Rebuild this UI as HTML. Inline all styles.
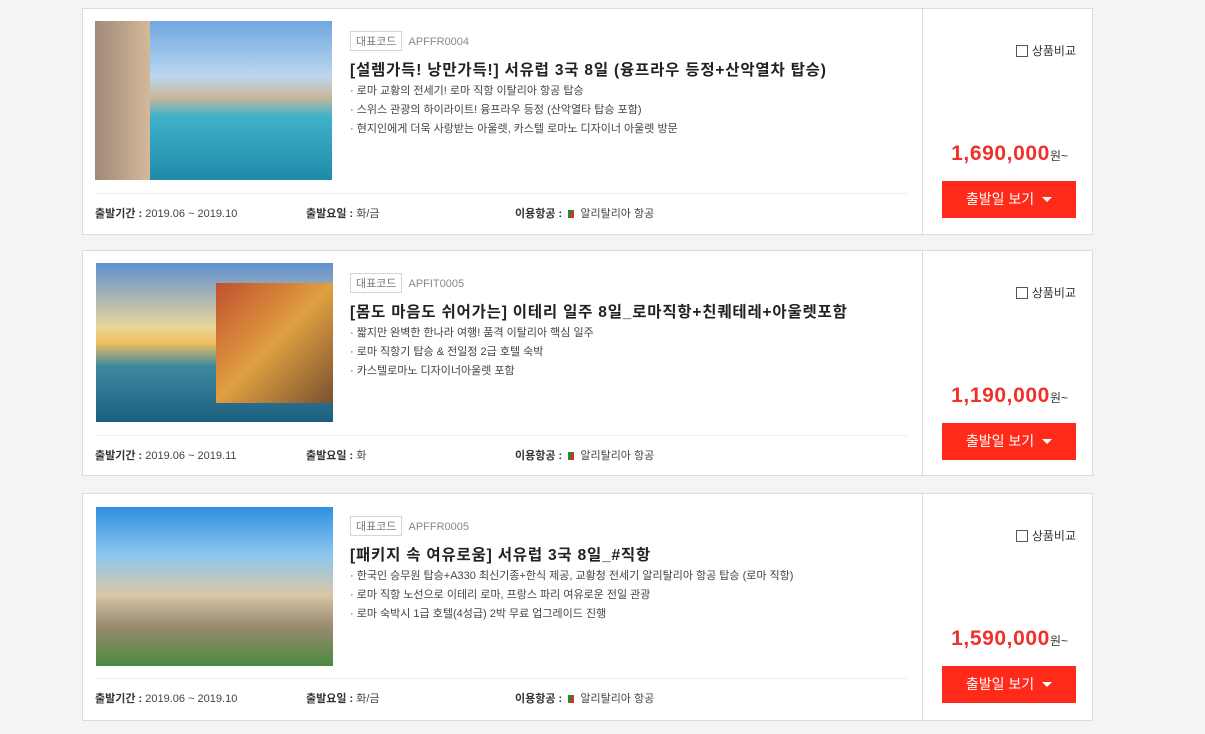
<!DOCTYPE html>
<html><head><meta charset="utf-8"><style>
*{margin:0;padding:0;box-sizing:border-box}
body{width:1205px;height:734px;background:#f4f4f4;font-family:"Liberation Sans","Noto Sans CJK KR",sans-serif;color:#333;position:relative;overflow:hidden}
.card{position:absolute;left:82px;width:1011px;background:#fff;border:1px solid #dcdcdc}
.img{position:absolute;left:12px;top:12px;width:237px;height:159px}
.code{position:absolute;left:267px;top:22px;font-size:11px;color:#888}
.code span{display:inline-block;border:1px solid #d5d5d5;padding:1px 5px;color:#777;margin-right:6px}
.title{position:absolute;left:267px;top:49px;font-size:15.5px;font-weight:bold;color:#222;white-space:nowrap;letter-spacing:0.8px}
.bul{position:absolute;left:267px;top:73px;font-size:11px;line-height:19px;color:#444;white-space:nowrap}
.sep{position:absolute;left:12px;width:813px;top:184px;border-top:1px solid #eee}
.ft{position:absolute;top:196px;font-size:11px;color:#444;white-space:nowrap}
.ft b{color:#333}
.right{position:absolute;left:839px;top:0;bottom:0;width:170px;border-left:1px solid #dcdcdc}
.cmp{position:absolute;right:16px;top:33px;font-size:12px;color:#333}
.cmp i{display:inline-block;width:12px;height:12px;border:1px solid #555;vertical-align:-2px;margin-right:4px}
.price{position:absolute;right:24px;top:133px;font-size:21px;font-weight:bold;color:#f0302a;white-space:nowrap;letter-spacing:0.6px}
.price small{font-size:12px;color:#333;font-weight:normal;letter-spacing:0}
.btn{position:absolute;left:19px;top:172px;width:134px;height:37px;background:#ff2a1a;color:#fff;font-size:14px;text-align:center;line-height:37px}
.btn em{display:inline-block;width:0;height:0;border-left:5px solid transparent;border-right:5px solid transparent;border-top:5px solid #fff;vertical-align:2px;margin-left:8px}
.fl{display:inline-block;width:6px;height:8px;background:linear-gradient(120deg,#2a8a2a 50%,#c33 50%);margin-right:6px;vertical-align:-1px}
</style></head><body>

<div class="card" style="top:8px;height:227px">
<div class="img" style="background:linear-gradient(180deg,#6fa6e0 0%,#bcd7ef 35%,#c9b79a 48%,#3fb2c9 60%,#1f8aa8 100%)"><div style="position:absolute;left:0;top:0;width:55px;height:159px;background:linear-gradient(90deg,#a08a78,#d3b99a)"></div></div>
<div class="code"><span>대표코드</span>APFFR0004</div>
<div class="title">[설렘가득! 낭만가득!] 서유럽 3국 8일 (융프라우 등정+산악열차 탑승)</div>
<div class="bul">· 로마 교황의 전세기! 로마 직항 이탈리아 항공 탑승<br>· 스위스 관광의 하이라이트! 융프라우 등정 (산악열타 탑승 포함)<br>· 현지인에게 더욱 사랑받는 아울렛, 카스텔 로마노 디자이너 아울렛 방문</div>
<div class="sep"></div>
<div class="ft" style="left:12px"><b>출발기간 :</b> 2019.06 ~ 2019.10</div>
<div class="ft" style="left:223px"><b>출발요일 :</b> 화/금</div>
<div class="ft" style="left:432px"><b>이용항공 :</b> &nbsp;<i class="fl"></i>알리탈리아 항공</div>
<div class="right"><div class="cmp"><i></i>상품비교</div><div class="price">1,690,000<small>원~</small></div><div class="btn">출발일 보기<em></em></div></div>
</div>

<div class="card" style="top:250px;height:226px">
<div class="img" style="left:13px;background:linear-gradient(180deg,#5f8fd0 0%,#e8d69a 40%,#f2c060 50%,#3d88a0 65%,#1c6080 100%)"><div style="position:absolute;left:120px;top:20px;width:117px;height:120px;background:linear-gradient(135deg,#c05030,#e0a040 50%,#7a5030)"></div></div>
<div class="code"><span>대표코드</span>APFIT0005</div>
<div class="title">[몸도 마음도 쉬어가는] 이테리 일주 8일_로마직항+친퀘테레+아울렛포함</div>
<div class="bul">· 짧지만 완벽한 한나라 여행! 품격 이탈리아 핵심 일주<br>· 로마 직항기 탑승 &amp; 전일정 2급 호텔 숙박<br>· 카스텔로마노 디자이너아울렛 포함</div>
<div class="sep"></div>
<div class="ft" style="left:12px"><b>출발기간 :</b> 2019.06 ~ 2019.11</div>
<div class="ft" style="left:223px"><b>출발요일 :</b> 화</div>
<div class="ft" style="left:432px"><b>이용항공 :</b> &nbsp;<i class="fl"></i>알리탈리아 항공</div>
<div class="right"><div class="cmp"><i></i>상품비교</div><div class="price">1,190,000<small>원~</small></div><div class="btn">출발일 보기<em></em></div></div>
</div>

<div class="card" style="top:493px;height:228px">
<div class="img" style="left:13px;top:13px;background:linear-gradient(180deg,#2f8fe0 0%,#8cc6f0 30%,#d8c8a8 55%,#9a8a70 75%,#4a8a40 100%)"></div>
<div class="code"><span>대표코드</span>APFFR0005</div>
<div class="title">[패키지 속 여유로움] 서유럽 3국 8일_#직항</div>
<div class="bul">· 한국인 승무원 탑승+A330 최신기종+한식 제공, 교황청 전세기 알리탈리아 항공 탑승 (로마 직항)<br>· 로마 직항 노선으로 이테리 로마, 프랑스 파리 여유로운 전일 관광<br>· 로마 숙박시 1급 호텔(4성급) 2박 무료 업그레이드 진행</div>
<div class="sep"></div>
<div class="ft" style="left:12px"><b>출발기간 :</b> 2019.06 ~ 2019.10</div>
<div class="ft" style="left:223px"><b>출발요일 :</b> 화/금</div>
<div class="ft" style="left:432px"><b>이용항공 :</b> &nbsp;<i class="fl"></i>알리탈리아 항공</div>
<div class="right"><div class="cmp"><i></i>상품비교</div><div class="price">1,590,000<small>원~</small></div><div class="btn">출발일 보기<em></em></div></div>
</div>

</body></html>
